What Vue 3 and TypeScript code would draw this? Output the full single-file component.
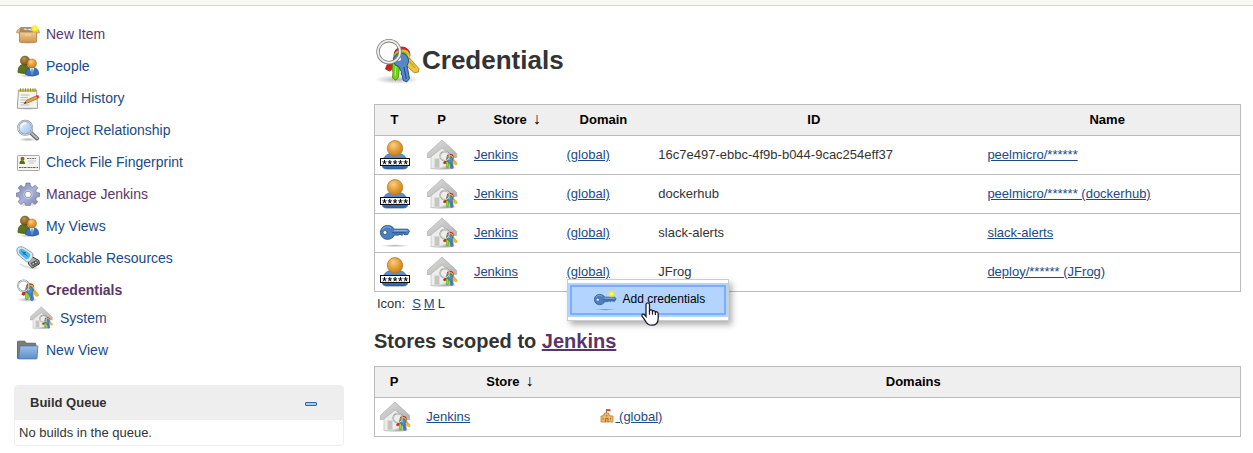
<script setup lang="ts">
interface Task {
  label: string
  icon: string
  visited?: boolean
  current?: boolean
  nested?: boolean
}

interface Credential {
  type: 'user' | 'key'
  id: string
  name: string
  menuOpen?: boolean
}

const tasks: Task[] = [
  { label: 'New Item', icon: 'package', visited: true },
  { label: 'People', icon: 'people' },
  { label: 'Build History', icon: 'notepad' },
  { label: 'Project Relationship', icon: 'search' },
  { label: 'Check File Fingerprint', icon: 'fingerprint' },
  { label: 'Manage Jenkins', icon: 'gear', visited: true },
  { label: 'My Views', icon: 'people' },
  { label: 'Lockable Resources', icon: 'usb' },
  { label: 'Credentials', icon: 'keyring', visited: true, current: true },
  { label: 'System', icon: 'house', nested: true },
  { label: 'New View', icon: 'folder' },
]

const credentials: Credential[] = [
  { type: 'user', id: '16c7e497-ebbc-4f9b-b044-9cac254eff37', name: 'peelmicro/******' },
  { type: 'user', id: 'dockerhub', name: 'peelmicro/****** (dockerhub)' },
  { type: 'key', id: 'slack-alerts', name: 'slack-alerts' },
  { type: 'user', id: 'JFrog', name: 'deploy/****** (JFrog)', menuOpen: true },
]
</script>

<template>
  <svg class="sprite" aria-hidden="true">
    <defs>
      <linearGradient id="g-blue" x1="0" y1="0" x2="0" y2="1">
        <stop offset="0" stop-color="#6797d3" /><stop offset="1" stop-color="#2f62a6" />
      </linearGradient>
      <radialGradient id="g-orange" cx=".4" cy=".3" r=".75">
        <stop offset="0" stop-color="#f8cf86" /><stop offset=".5" stop-color="#e5a03a" /><stop offset="1" stop-color="#c47a16" />
      </radialGradient>
      <radialGradient id="g-brown" cx=".4" cy=".3" r=".75">
        <stop offset="0" stop-color="#bd9350" /><stop offset="1" stop-color="#754a10" />
      </radialGradient>
      <linearGradient id="g-box" x1="0" y1="0" x2="0" y2="1">
        <stop offset="0" stop-color="#eecb93" /><stop offset="1" stop-color="#d19550" />
      </linearGradient>
      <linearGradient id="g-roof" x1="0" y1="0" x2="1" y2="1">
        <stop offset="0" stop-color="#dcdcdc" /><stop offset="1" stop-color="#b4b4b4" />
      </linearGradient>
      <linearGradient id="g-gear" x1="0" y1="0" x2="1" y2="1">
        <stop offset="0" stop-color="#7f87a8" /><stop offset=".5" stop-color="#a9b3d8" /><stop offset="1" stop-color="#7b82a3" />
      </linearGradient>
      <linearGradient id="g-lens" x1="0" y1="0" x2="1" y2="1">
        <stop offset="0" stop-color="#f2f9ff" /><stop offset="1" stop-color="#8fbdf0" />
      </linearGradient>
      <linearGradient id="g-folder" x1="0" y1="0" x2="0" y2="1">
        <stop offset="0" stop-color="#9cbfe6" /><stop offset="1" stop-color="#5f90c9" />
      </linearGradient>
      <radialGradient id="g-shadow">
        <stop offset="0" stop-color="#000" stop-opacity=".3" /><stop offset="1" stop-color="#000" stop-opacity="0" />
      </radialGradient>
      <radialGradient id="g-sun">
        <stop offset="0" stop-color="#fffcae" /><stop offset=".5" stop-color="#fcec1c" /><stop offset="1" stop-color="#fcec1c" stop-opacity=".1" />
      </radialGradient>
    </defs>

    <symbol id="i-package" viewBox="0 0 24 24">
      <ellipse cx="12" cy="20.3" rx="10" ry="2" fill="url(#g-shadow)" />
      <path d="M5 5.500h14l1.500 5h-17z" fill="#b98b52" stroke="#a87841" stroke-width=".7" />
      <path d="M7 8c1-3 3-2 4-1s2-2 4 0 2 1 2 2z" fill="#e9e4db" stroke="#837867" stroke-width=".6" />
      <path d="M3.500 10h17v9.500q0 .8-.8.8H4.300q-.8 0-.8-.8z" fill="url(#g-box)" stroke="#b47a3a" stroke-width=".8" />
      <path d="M3.500 9.500L5 5.500 1 8.500l-.5 2.300 3 .5zM20.500 9.500L19 5.500l4 3 .5 2.300-3 .5z" fill="#e8bd80" stroke="#b47a3a" stroke-width=".6" />
      <path d="M9 13h6" stroke="#f4dbb2" stroke-width="1" />
      <circle cx="18.700" cy="6.700" r="4.300" fill="url(#g-sun)" />
    </symbol>

    <symbol id="i-people" viewBox="0 0 24 24">
      <ellipse cx="13" cy="21.500" rx="10" ry="2" fill="url(#g-shadow)" />
      <path d="M2 18.500c-.3-5 2-8 5.500-8s6.500 2.500 6.500 8q-6 2-12 0z" fill="#5b7619" stroke="#3b5208" stroke-width=".7" />
      <circle cx="9" cy="6.700" r="4.600" fill="url(#g-brown)" stroke="#6b430d" stroke-width=".6" />
      <path d="M9.500 20.500c-.3-4.500 2-7 6.500-7s7 2.500 6.500 7q-6 3-13 0z" fill="#3a6fb7" stroke="#234f8e" stroke-width=".7" />
      <path d="M13.700 14l2.300 7 2.300-7z" fill="#e8f0fa" /><path d="M15.500 15h1l.4 4-.9 1.500-.9-1.500z" fill="#4b82cb" />
      <circle cx="16" cy="9.500" r="4.500" fill="url(#g-orange)" stroke="#b8731b" stroke-width=".6" />
    </symbol>

    <symbol id="i-notepad" viewBox="0 0 24 24">
      <ellipse cx="12" cy="22.500" rx="11" ry="1.500" fill="url(#g-shadow)" />
      <path d="M2.500 4h18l1.200 18.300H1.300z" fill="#f3f3f0" stroke="#8b8c88" stroke-width=".8" />
      <path d="M2.700 3.800h17.700v2H2.600z" fill="#c2bd4a" />
      <path d="M4.500 2.200v3.500m2.500-3.500v3.500m2.500-3.500v3.500m2.500-3.500v3.500m2.500-3.500v3.500m2.500-3.500v3.500m2-3.500v3.500" stroke="#8f8a20" stroke-width=".9" />
      <path d="M4.500 9h9m-9 2.500h7.500M4.500 14h6m-6 2.500h3.500m-3.500 2.500h9" stroke="#b6b8b3" stroke-width=".9" />
      <path d="M8 17.500l3-3.500L21 9.600l1.200 2.700-10.300 4.500z" fill="#e0a350" stroke="#8f5d1b" stroke-width=".7" />
      <path d="M20.300 9.900l2-1 1.200 2.700-2 1z" fill="#dc3d3d" /><path d="M7.600 17.800l2-2 .8 1.200z" fill="#333" />
    </symbol>

    <symbol id="i-search" viewBox="0 0 24 24">
      <ellipse cx="12" cy="21.500" rx="9" ry="2" fill="url(#g-shadow)" />
      <path d="M14.500 14.500l6.500 6" stroke="#626468" stroke-width="4" stroke-linecap="round" />
      <path d="M15 14.700l6 5.600" stroke="#b7bac0" stroke-width="2" stroke-linecap="round" />
      <circle cx="9.200" cy="9.800" r="7" fill="url(#g-lens)" stroke="#888d94" stroke-width="2" />
      <circle cx="9.200" cy="9.800" r="7" fill="none" stroke="#dfe3e8" stroke-width=".9" />
      <path d="M5 9.500c.5-3 2.500-4.300 5-4" stroke="#fff" stroke-width="1.500" fill="none" />
    </symbol>

    <symbol id="i-fingerprint" viewBox="0 0 24 24">
      <rect x="1.500" y="5.500" width="22" height="15" rx=".8" fill="#f4f4f1" stroke="#a0a19c" stroke-width=".9" />
      <path d="M3.500 14c-.2-2.400.8-3.700 2.500-3.700s3 1.300 3 3.700z" fill="#53720f" /><circle cx="6.500" cy="8.800" r="2" fill="#99621b" />
      <path d="M11 8.500h9" stroke="#777" stroke-width="1" stroke-dasharray="2 .5" />
      <path d="M12 11h8m-7 2h5" stroke="#bbb" stroke-width=".8" />
      <path d="M3 17.500h19" stroke="#666" stroke-width="1" stroke-dasharray="2.500 .5 1 .5" />
    </symbol>

    <symbol id="i-gear" viewBox="0 0 24 24">
      <ellipse cx="12" cy="22.300" rx="9" ry="1.700" fill="url(#g-shadow)" />
      <path fill-rule="evenodd" d="M10 1h4l.5 3.300 2 .9 2.800-2 2.500 2.600-2 2.700.8 2 3.100.5v3.600l-3.200.6-.8 2 2 2.700-2.700 2.500-2.600-1.900-2 .8-.5 3.200H10l-.5-3.200-2-.8L4.800 22.400l-2.600-2.600 1.900-2.700-.8-2L.4 14.600V11l3-.5.8-2-2-2.700 2.600-2.600 2.800 2 1.900-.8zM12 9.300a3.200 3.200 0 1 0 .01 0z" fill="url(#g-gear)" stroke="#626888" stroke-width=".6" />
      <circle cx="12" cy="12.500" r="4.200" fill="none" stroke="#c9cfe8" stroke-width="1" />
    </symbol>

    <symbol id="i-usb" viewBox="0 0 24 24">
      <path d="M4 18q8 5 17 4" stroke="#bbb" stroke-width="1.500" fill="none" opacity=".5" />
      <path d="M12.500 15.500l4-4.500 6.500 3.500.3 3.500-7 4-3.800-4z" fill="#aaaca9" stroke="#363936" stroke-width="1" />
      <path d="M14.500 17l6-3 2 3.300-5.800 3.500z" fill="#555855" />
      <path d="M16.500 18.300l1.300-.8m1.400-.8l1.300-.7" stroke="#eee" stroke-width="1.300" />
      <path d="M.8 4.500C.8 2 2.500.8 5 .8q1.500 0 2.800.7l8 5q1.200 1 1.200 2.500.2 2-1 3.500l-2.500 3q-1.500 1-3 .2L3.500 10Q.8 7.500.8 4.500z" fill="#dce7ef" stroke="#8794a0" stroke-width=".9" />
      <path d="M3 5c.3-2.200 2.500-2.700 4.500-1.600l5.500 3.500q2 1.500.8 3.800l-1.300 1.900q-1.500 1.200-3 .2L4.500 8.800Q2.800 7.300 3 5z" fill="#4bb8ee" />
      <path d="M5.500 5.300l6 4.700m-4-3.200l2.500-.3m-2 2.400l-.2-1.700" stroke="#145f9b" stroke-width=".9" fill="none" />
    </symbol>

    <symbol id="i-keyring" viewBox="0 0 48 48">
      <ellipse cx="23" cy="43.500" rx="22" ry="4.500" fill="url(#g-shadow)" />
      <path d="M20 25l-7 4-1.500 4 4 2 8.500-6z" fill="#d81f1f" stroke="#9f1212" stroke-width=".8" />
      <path d="M30 17l5 2 .5 3 9.300 10.500-.3 3.500-4.300.7-10-9z" fill="#edc43a" stroke="#a98715" stroke-width=".9" />
      <path d="M35.500 25.500l5.500 6.500" stroke="#b28f19" stroke-width="1" />
      <path d="M19 25h7l-1.500 16-2.700 3.200-3.300-2.300.5-6-1-2z" fill="#73d216" stroke="#459309" stroke-width=".9" />
      <path d="M22 30l-1 10" stroke="#b3f076" stroke-width="1" />
      <circle cx="28" cy="19" r="8" fill="#d92626" stroke="#9c1515" stroke-width=".8" />
      <path d="M30 13.500a8 8 0 0 1 6 8l-3 3z" fill="#edc43a" />
      <path d="M19.500 21.500a8.500 8.500 0 0 1 14.500-5.500l1 5z" fill="#e5bc38" />
      <path d="M18.500 23.500a9 9 0 0 1 14-6.500l2 5z" fill="#67ba19" />
      <path d="M19.500 25a7.500 7.500 0 1 1 13.500 4.200l2.500 13.500-3 3.300-3.500-2-.5-4-1.500-2 .5-2-2.500-5a7.500 7.500 0 0 1-5.500-6z" fill="#5688c6" stroke="#234f8b" stroke-width="1" />
      <path d="M30 31l2.200 12" stroke="#224e88" stroke-width="1.100" /><circle cx="25" cy="23" r="2" fill="#eef3f9" />
      <circle cx="15" cy="15.700" r="11" fill="none" stroke="#7c7e7b" stroke-width="3.400" />
      <circle cx="15" cy="15.700" r="11" fill="none" stroke="#eeefed" stroke-width="1.800" />
    </symbol>

    <symbol id="i-house" viewBox="0 0 32 32">
      <ellipse cx="15" cy="29.500" rx="14" ry="2" fill="url(#g-shadow)" />
      <path d="M4 14L15 6l11 8v15.500H4z" fill="#ededec" stroke="#c4c5c2" stroke-width=".8" />
      <path d="M7.500 19.500h5v9.500h-5z" fill="#c4c5c2" stroke="#dcdcdc" stroke-width=".8" />
      <path d="M15 1L.3 14.500v4L3 18.500 15 9l12 9.500h2.700v-4z" fill="url(#g-roof)" stroke="#a6a6a6" stroke-width=".6" stroke-linejoin="round" />
      <use href="#i-keyring" x="11.500" y="10.500" width="20" height="20" />
    </symbol>

    <symbol id="i-folder" viewBox="0 0 24 24">
      <path d="M1.500 20.500V4q0-.8.800-.8h6.500l1.200 2h9q.8 0 .8.800v14.500z" fill="#797c78" stroke="#555753" stroke-width=".8" />
      <path d="M2.500 20.500L4 8.500q.1-.6.800-.6h16.500q.6 0 .6.600l-.9 11.800q-.1.600-.8.600H2.700z" fill="url(#g-folder)" stroke="#4577b0" stroke-width=".8" />
    </symbol>

    <symbol id="i-user" viewBox="0 0 32 32">
      <path d="M2.500 27v-4C3 18.500 6 15.500 10.500 14.500h9c4.500 1 7.500 4 8 8.500v4q0 3-4.500 3H7q-4.500 0-4.500-3z" fill="url(#g-blue)" stroke="#2b5a99" stroke-width=".7" />
      <circle cx="15" cy="9.300" r="7.700" fill="url(#g-orange)" stroke="#bd7a22" stroke-width=".8" />
      <rect x=".5" y="19.500" width="29" height="7" fill="#fff" stroke="#111" />
      <path d="M4.500 21v2.300m-2-.6l2 .6 2-.6m-3.300 2.600l1.300-2 1.300 2M9.800 21v2.300m-2-.6l2 .6 2-.6m-3.300 2.600l1.300-2 1.300 2M15.100 21v2.300m-2-.6l2 .6 2-.6m-3.300 2.600l1.300-2 1.300 2M20.400 21v2.300m-2-.6l2 .6 2-.6m-3.300 2.600l1.300-2 1.300 2M25.700 21v2.300m-2-.6l2 .6 2-.6m-3.300 2.600l1.300-2 1.300 2" fill="none" stroke="#000" stroke-width="1" />
    </symbol>

    <symbol id="i-key" viewBox="0 0 32 32">
      <ellipse cx="15" cy="28.700" rx="14" ry="1.500" fill="url(#g-shadow)" />
      <path d="M7.500 8.500c3.300 0 5.800 1.500 6.700 3.700h13.600l1.600 2-1.700 3.300-2.700.3-1.300-1-1.700 1.500-2-1.200-1.500 1h-4.300c-1 2.700-3.500 4.200-6.700 4.200-4 0-7-3-7-7s3-6.800 7-6.800z" fill="#4c7fbd" stroke="#234e84" stroke-width=".9" />
      <path d="M14 13.700h13.500" stroke="#9dbde2" stroke-width="1" /><path d="M12 15.700h14" stroke="#244f86" stroke-width=".8" />
      <path d="M2.500 12.500C4 9.500 8.500 9 11 11" stroke="#8db2df" fill="none" /><circle cx="5" cy="15.500" r="2" fill="#fff" stroke="#234e84" stroke-width=".7" />
    </symbol>

    <symbol id="i-new-key" viewBox="0 0 32 32">
      <use href="#i-key" width="32" height="32" />
      <circle cx="23.500" cy="8" r="5" fill="url(#g-sun)" />
    </symbol>

    <symbol id="i-domain" viewBox="0 0 16 16">
      <path d="M7.500 1v4" stroke="#6c5540" stroke-width=".8" /><path d="M8 1.200h3.500v2H8z" fill="#d93b3b" />
      <path d="M2 8h2V6.800h1.500V5h4v1.800H11V8h3v6H2z" fill="#eab96e" stroke="#bd8038" stroke-width=".8" />
      <path d="M6.500 14v-3.500h2.500V14M4 10v1.500m7.500-1.500v1.500M7.700 7v1.500" stroke="#a06c2c" fill="none" />
    </symbol>
  </svg>

  <div class="breadcrumb-bar"></div>
  <div class="page">
    <aside class="side">
      <nav class="tasks" aria-label="Tasks">
        <a
          v-for="task in tasks"
          :key="task.label"
          href="#"
          :class="['task', { visited: task.visited, current: task.current, nested: task.nested }]"
        >
          <svg class="icon-md" aria-hidden="true"><use :href="`#i-${task.icon}`" /></svg>
          <span>{{ task.label }}</span>
        </a>
      </nav>

      <section class="queue">
        <header class="queue-head">
          <span>Build Queue</span>
          <button class="collapse" type="button" aria-label="Collapse">
            <svg width="12" height="4" viewBox="0 0 12 4"><rect x=".5" y=".5" width="11" height="3" rx=".5" fill="#a9c9ee" stroke="#3465a4" /></svg>
          </button>
        </header>
        <div class="queue-body">No builds in the queue.</div>
      </section>
    </aside>

    <main class="main">
      <h1><svg class="icon-xl" aria-hidden="true"><use href="#i-keyring" /></svg>Credentials</h1>

      <table>
        <colgroup><col class="c-type" /><col class="c-icon" /><col class="c-store" /><col class="c-domain" /><col class="c-id" /><col /></colgroup>
        <thead>
          <tr>
            <th>T</th>
            <th>P</th>
            <th class="sorted">Store<span class="arrow">↓</span></th>
            <th>Domain</th>
            <th>ID</th>
            <th>Name</th>
          </tr>
        </thead>
        <tbody>
          <tr v-for="c in credentials" :key="c.id">
            <td><svg class="icon-lg" aria-hidden="true"><use :href="`#i-${c.type}`" /></svg></td>
            <td><svg class="icon-lg" aria-hidden="true"><use href="#i-house" /></svg></td>
            <td><a href="#">Jenkins</a></td>
            <td>
              <span class="anchor">
                <a href="#">(global)</a>
                <div v-if="c.menuOpen" class="menu">
                  <button type="button" class="menu-item">
                    <svg class="icon-md" aria-hidden="true"><use href="#i-new-key" /></svg>
                    Add credentials
                  </button>
                  <svg class="pointer" viewBox="0 0 18 24" aria-hidden="true">
                    <path d="M5 14.500V2.800C5 .3 8.500.3 8.500 2.800V8.500c1-1 2.800-.7 3 .6 1-.8 2.700-.4 2.900.9 1.200-.6 2.800.1 2.800 1.700v4.500c0 4.500-2.200 7-6.500 7-3.300 0-4.700-1.400-6.200-4L1.200 14.300C.2 12.500 2.300 11.300 3.600 12.800z" fill="#fff" stroke="#1c1c2c" stroke-width="1.300" />
                    <path d="M8.500 8.500v4.200M11.500 9.100v3.700M14.400 10v3" stroke="#1c1c2c" stroke-width="1.200" />
                  </svg>
                </div>
              </span>
            </td>
            <td>{{ c.id }}</td>
            <td><a href="#">{{ c.name }}</a></td>
          </tr>
        </tbody>
      </table>

      <div class="sizes"><span class="sizes-label">Icon:</span> <a href="#">S</a> <a href="#">M</a> <span>L</span></div>

      <h2>Stores scoped to <a href="#" class="visited">Jenkins</a></h2>

      <table>
        <colgroup><col class="c-icon" /><col class="c-scope" /><col /></colgroup>
        <thead>
          <tr>
            <th>P</th>
            <th class="sorted">Store<span class="arrow">↓</span></th>
            <th>Domains</th>
          </tr>
        </thead>
        <tbody>
          <tr>
            <td><svg class="icon-lg" aria-hidden="true"><use href="#i-house" /></svg></td>
            <td><a href="#">Jenkins</a></td>
            <td><a href="#"><svg class="icon-sm" aria-hidden="true"><use href="#i-domain" /></svg> (global)</a></td>
          </tr>
        </tbody>
      </table>
    </main>
  </div>
</template>

<style>
body {
  margin: 0;
  background: #fff;
  color: #333;
  font: 13px/15px "Liberation Sans", Arial, Helvetica, sans-serif;
}
</style>

<style scoped>
.sprite { position: absolute; width: 0; height: 0; }
a { color: #204a87; }
a.visited { color: #5c3566; }
button { font: inherit; }

.breadcrumb-bar {
  height: 5px;
  background: #f6faf2;
  border-bottom: 1px solid #d3d7cf;
}
.page { display: flex; gap: 30px; padding: 12px 12px 0 14px; }
.side { flex: 0 0 330px; }
.main { flex: 1; min-width: 0; padding-top: 18px; }

.icon-sm { width: 16px; height: 16px; vertical-align: -3px; }
.icon-md { width: 24px; height: 24px; flex: none; }
.icon-lg { width: 32px; height: 32px; display: block; }
.icon-xl { width: 48px; height: 48px; }

.tasks { display: flex; flex-direction: column; }
.task {
  display: flex;
  align-items: center;
  gap: 6px;
  height: 32px;
  padding-left: 2px;
  font-size: 14px;
  text-decoration: none;
}
.task.current { font-weight: bold; }
.task.nested { height: 24px; padding-left: 16px; }
.task.nested + .task { margin-top: 4px; }

.queue {
  margin-top: 19px;
  border: 1px solid #eee;
  border-radius: 4px;
}
.queue-head {
  display: flex;
  align-items: center;
  justify-content: space-between;
  height: 32px;
  padding: 0 26px 2px 15px;
  background: #eee;
  font-weight: bold;
}
.collapse { display: flex; padding: 4px 0 0; border: 0; background: none; }
.queue-body { padding: 5px 4px; }

h1 {
  display: flex;
  align-items: center;
  margin: 0 0 20px;
  font-size: 26px;
  line-height: 48px;
}
h2 { margin: 18px 0 13px; font-size: 20px; line-height: 24px; }

table {
  width: 100%;
  table-layout: fixed;
  border-collapse: collapse;
  border: 1px solid #bbb;
}
.c-type { width: 5.5%; }
.c-icon { width: 5.4%; }
.c-store { width: 10.7%; }
.c-domain { width: 10.6%; }
.c-id { width: 38%; }
.c-scope { width: 20%; }
th {
  height: 28px;
  padding: 0 8px 2px 0;
  background: #efefef;
  color: #000;
  text-align: center;
}
th.sorted { padding: 0 0 2px 4px; }
.arrow { margin-left: 6px; font-size: 16px; font-weight: normal; line-height: 1; }
td { height: 36px; padding: 0 0 2px 5px; border-top: 1px solid #bbb; }
td .icon-lg { margin-top: 2px; }

.sizes { display: flex; gap: 3px; padding: 4px 3px 0; }
.sizes-label { margin-right: 4px; }

.anchor { position: relative; display: inline-block; }
.menu {
  position: absolute;
  z-index: 1;
  top: 100%;
  left: 0;
  width: 160px;
  padding: 3px 0;
  background: #fff;
  border: 1px solid #ccc;
  box-shadow: 3px 4px 6px rgba(0, 0, 0, 0.3);
}
.menu-item {
  display: flex;
  align-items: center;
  gap: 5px;
  width: 100%;
  height: 34px;
  padding: 0 0 0 24px;
  background: #b3d4ff;
  border: 2px solid #b3d4ff;
  outline: 2px solid #7dadff;
  outline-offset: -4px;
  color: #000;
  font-size: 12px;
}
.pointer { position: absolute; left: 73px; top: 22px; width: 18px; height: 24px; }
</style>
